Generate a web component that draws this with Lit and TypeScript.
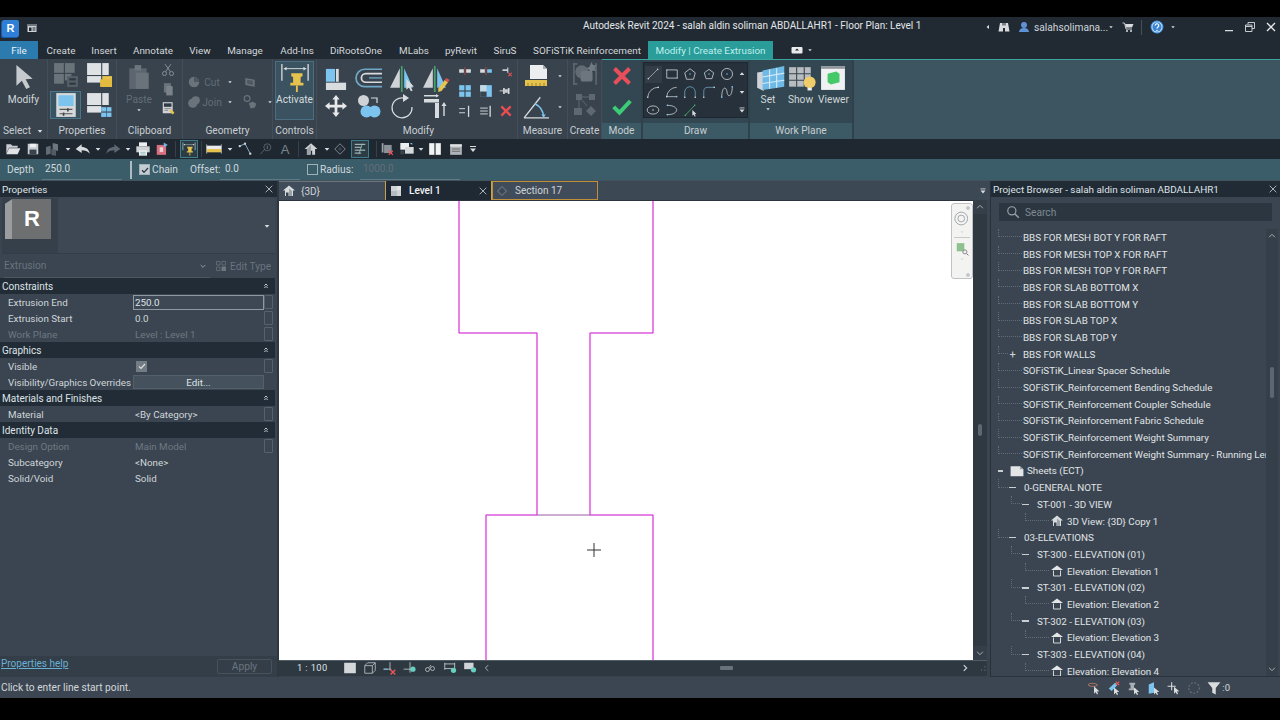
import { LitElement, html, css, svg } from "lit";
import { customElement } from "lit/decorators.js";

const W = "#d8dcdf", G = "#8b9299", D = "#5d6771", B = "#7cc4ee", Y = "#e6c24e";
const line = (d: string, c = W, w = 1.4) => svg`<path d=${d} fill="none" stroke=${c} stroke-width=${w}/>`;
const fill = (d: string, c = W) => svg`<path d=${d} fill=${c}/>`;
const r = (x: number, y: number, w: number, h: number, c = W) => svg`<rect x=${x} y=${y} width=${w} height=${h} fill=${c}/>`;
const dot = (x: number, y: number, c = B, s = 1.4) => svg`<circle cx=${x} cy=${y} r=${s} fill=${c}/>`;
const cursor = fill("M16 12l0 10 2.4-2.2 1.8 3.6 1.6-.8-1.8-3.5 3-.2z", W);

const ICONS: Record<string, any> = {
  logoDoc: svg`${r(3, 4, 18, 16, "#cfd3d6")}${r(3, 4, 18, 4, "#6d747b")}${r(6, 11, 5, 7, "#1f2933")}${r(13, 11, 6, 2, "#1f2933")}${r(13, 15, 6, 2, "#1f2933")}`,
  arrow: fill("M5 1V20l5-4.500 4 7.500 3.500-1.500-4-7.500 6.500-.5z", "#c6cace"),
  tilesGrey: svg`${r(1, 1, 9, 9, "#6b737a")}${r(11, 1, 9, 9, "#6b737a")}${r(1, 11, 9, 9, "#6b737a")}${r(11, 11, 6, 6, "#6b737a")}${r(13, 13, 10, 10, "#565e66")}${r(15, 15, 6, 2, "#2f3740")}${r(15, 19, 6, 2, "#2f3740")}`,
  tilesFolder: svg`${r(1, 1, 13, 11, "#dfe2e4")}${r(15, 1, 6, 11, "#dfe2e4")}${r(1, 13, 13, 6, "#dfe2e4")}${r(15, 13, 9, 10, Y)}${r(13, 16, 11, 7, "#e3bc3f")}`,
  propBox: svg`${r(3, 1, 18, 22, "#d6d9db")}${r(5, 3, 14, 10, B)}${line("M6 16H18M6 20H18", "#555", 1)}${r(13, 15, 1.5, 3, "#444")}${r(9, 19, 1.5, 3, "#444")}`,
  tilesBlue: svg`${r(1, 1, 13, 11, "#dfe2e4")}${r(15, 1, 6, 11, "#dfe2e4")}${r(1, 13, 13, 6, "#dfe2e4")}${r(14, 14, 4.500, 4, B)}${r(19, 14, 4.500, 4, B)}${r(14, 19, 4.500, 4, B)}${r(19, 19, 4.500, 4, B)}`,
  paste: svg`${r(3, 4, 16, 19, "#5d6670")}${r(8, 1, 6, 5, "#6d757d")}${r(9, 8, 12, 15, "#6a727a")}`,
  cut: svg`${line("M7 2l9 13M17 2L8 15", G, 1.6)}<circle cx="6" cy="18" r="3.500" fill="none" stroke=${G} stroke-width="1.600"/><circle cx="18" cy="18" r="3.500" fill="none" stroke=${G} stroke-width="1.600"/>`,
  copy: svg`${r(5, 2, 12, 16, "#6a727a")}${r(9, 7, 11, 16, "#7a828a")}`,
  matchProp: svg`${r(3, 2, 17, 19, "#cfd3d6")}${r(5, 4, 13, 6, "#2f3a44")}${line("M6 13h11M6 16h6", "#555", 1)}${fill("M14 17l4-3 5 6-3 3z", Y)}`,
  geoCut: svg`<circle cx="12" cy="12" r="9" fill="#6a727a"/><path d="M12 3a9 9 0 0 1 9 9H12z" fill="#4f5860"/>`,
  geoBox: svg`${fill("M4 5l16 3v12L4 17z", "#6a727a")}${fill("M7 8l10 2v7L7 15z", "#4f5860")}`,
  geoJoin: svg`<circle cx="10" cy="14" r="8" fill="#6a727a"/><circle cx="15" cy="9" r="7" fill="#6a727a"/>`,
  geoSplit: svg`<circle cx="7" cy="6" r="5" fill="none" stroke="#6a727a" stroke-width="2"/>${fill("M10 14l7-3 6 4-3 7-7 1z", "#6a727a")}`,
  pin: svg`${line("M2 1V19M30 1V19", W, 1.4)}${line("M4 6H28", W, 1)}${fill("M4 6l3-2v4zM28 6l-3-2v4z", W)}${fill("M12 11H24V14L22 15V21H25V24H11V21H14V15L12 14z", Y)}${r(17, 24, 2, 7, Y)}`,
  alignBox: svg`${r(1, 1, 10, 14, B)}${r(12, 1, 3, 14, "#d8dcdf")}${r(1, 16, 22, 8, "#d8dcdf")}`,
  offset: svg`${line("M24 3H8a8 8 0 0 0 0 16H24", "#6fa8c6", 1.6)}${line("M24 7H9a4 4 0 0 0 0 8H24", W, 1.6)}${line("M24 11H12", "#6fa8c6", 1.2)}`,
  mirror: svg`${fill("M10 2V20H1z", "#cfd3d6")}${fill("M14 2V20H22z", B)}${r(11, 0, 1.6, 24, "#46a06c")}${cursor}`,
  mirrorPick: svg`${fill("M10 2V20H1z", "#cfd3d6")}${fill("M14 2V20H22z", B)}${r(11, 0, 1.6, 24, "#46a06c")}${fill("M15 21l6-8 3 2-6 8-3 1z", Y)}${fill("M21 13l1.500-2 3 2-1.500 2z", "#e05050")}`,
  move: fill("M12 0l4 5h-2.500v5.500H19V8l5 4-5 4v-2.500H13.500V19H16l-4 5-4-5h2.500V13.500H5V16L0 12l5-4v2.500h5.500V5H8z", "#e6e8ea"),
  copyCircles: svg`<circle cx="6.500" cy="6.500" r="5.500" fill="#cfd3d6"/>${line("M14 4H20V9", W, 1.2)}<circle cx="9.500" cy="17.500" r="6" fill=${B}/><circle cx="17.500" cy="17.500" r="6" fill=${B}/>`,
  rotate: svg`${line("M14 4A10 10 0 1 0 22 13", W, 1.2)}${fill("M13 0l6 4-6 4z", W)}`,
  trim: svg`${r(1, 5, 15, 3.500, W)}${r(12, 9, 4, 15, W)}${r(1, 1, 12, 1.500, W)}${fill("M13 0l3 1.700-3 1.700z", W)}${line("M21 11V22", W, 1.4)}${fill("M21 8l2.500 4h-5z", W)}`,
  split1: svg`${r(2, 9, 8, 6, "#d8dcdf")}${r(14, 9, 8, 6, "#d8dcdf")}${r(11, 5, 1.800, 14, "#a04848")}`,
  split2: svg`${r(2, 9, 8, 6, "#d8dcdf")}${r(14, 9, 8, 6, B)}${r(11, 5, 1.800, 14, "#a04848")}`,
  pinX: svg`${fill("M6 9H14V6h2V15H14V12H6z", "#c9cdd1")}${line("M16 15l6 6M22 15l-6 6", "#e55", 1.800)}`,
  grid4: svg`${r(2, 2, 9, 9, B)}${r(13, 2, 9, 9, B)}${r(2, 13, 9, 9, B)}${r(13, 13, 9, 9, B)}`,
  scale: svg`${r(2, 2, 20, 20, B)}${r(2, 2, 11, 11, "#c4d9e4")}${r(2, 13, 11, 9, "#39444f")}`,
  pinH: svg`${r(7, 7, 3, 10, W)}${r(10, 9, 5, 6, "#c9cdd1")}${r(15, 7, 3, 10, W)}${r(1, 11, 6, 1.500, W)}`,
  arrayA: svg`${line("M2 8H12M2 15H12", W, 1.600)}${r(17, 3, 2.200, 19, W)}`,
  arrayB: svg`${line("M2 7H15M2 12H15M2 17H15", W, 1.600)}${r(18, 3, 2.200, 19, W)}`,
  redX: line("M4 4L20 20M20 4L4 20", "#ea4c50", 4),
  box3d: svg`${fill("M6 1H19L23 5V15H6z", "#eceeef")}${fill("M19 1V5H23z", "#a8adb2")}${r(1, 16, 22, 6, Y)}${line("M4 19v3M8 19v3M12 19v3M16 19v3M20 19v3", "#a0822a", 1)}`,
  angle: svg`${line("M1 22L16 3M1 22H24", W, 1.2)}${line("M11 9A14 14 0 0 1 19 21", B, 1.400)}${fill("M17 19h4l-2 3z", B)}`,
  createA: svg`${r(1, 2, 1.500, 20, D)}${r(1, 2, 4, 1.500, D)}${r(1, 20.500, 4, 1.500, D)}${r(21.500, 2, 1.500, 20, D)}<circle cx="9" cy="10" r="6" fill="#626b74"/><rect x="8" y="9" width="11" height="10" rx="2" fill="#6d767e"/>${fill("M18 1l1.500 3 3-.5-1.500 3 1.500 2.500-3.500 0-1.500 2-1.500-3-3-1 3-1.500z", "#707a83")}`,
  createB: svg`${r(3, 1, 6, 6, "#5f6871")}${r(16, 1, 6, 6, "#5f6871")}${r(1, 15, 8, 7, "#5f6871")}${fill("M18 13l5 5-5 5-5-5z", "#5f6871")}${line("M9 4H16M6 7V15M9 7L14 13", "#5f6871", 1)}`,
  bigX: line("M3 3L21 21M21 3L3 21", "#e84f58", 4.800),
  check: line("M2 13L9 20L22 6", "#3ecb75", 4.800),
  checkDark: line("M3 13L9 19L21 6", "#2c3a44", 4),
  checkW: line("M3 13L9 19L21 6", "#dde0e3", 3.600),
  dLine: svg`${line("M4 20L20 4", W, 1)}${dot(4, 20, "#cfd3d6")}${dot(20, 4, "#cfd3d6")}`,
  dRect: svg`${line("M3 5H21V19H3z", W, 1.300)}${dot(3, 5, B, 1.200)}${dot(21, 19, B, 1.200)}`,
  dPoly: svg`${line("M12 3L21 10L18 21H6L3 10z", W, 1.300)}${dot(12, 12, B, 1.200)}`,
  dPoly2: svg`${line("M12 4L20 10L17 20H7L4 10z", W, 1.300)}${dot(12, 12, B, 1.200)}`,
  dCircle: svg`<circle cx="12" cy="12" r="9.500" fill="none" stroke=${W} stroke-width="1.300"/>${dot(12, 12, B, 1.300)}`,
  dArc1: svg`${line("M3 21A18 18 0 0 1 21 4", W, 1.200)}${dot(3, 21, "#cfd3d6")}${dot(21, 4, "#cfd3d6")}`,
  dArc2: svg`${line("M3 20A17 17 0 0 1 20 4M3 20H20", W, 1.200)}${dot(20, 20, B)}${dot(3, 20, "#cfd3d6")}`,
  dArc3: svg`${line("M3 21V12a9 9 0 0 1 18 0V21", "#6fa8c6", 1.300)}${dot(3, 21, "#cfd3d6")}${dot(21, 21, "#cfd3d6")}`,
  dArc4: svg`${line("M3 21V11a7 7 0 0 1 7-7H21", "#6fa8c6", 1.300)}${dot(3, 21, "#cfd3d6")}${dot(21, 4, "#cfd3d6")}`,
  dSpline: svg`${line("M3 21C3 2 11 2 12 12S21 21 21 3", W, 1.300)}${dot(3, 21)}${dot(21, 3)}`,
  dEllipse: svg`<ellipse cx="12" cy="12" rx="10" ry="7" fill="none" stroke=${W} stroke-width="1.300"/>${dot(12, 12, W, 1.300)}`,
  dPartial: svg`${line("M4 4C16 4 20 9 20 12S16 20 4 20", W, 1.300)}${dot(4, 4)}${dot(4, 20)}`,
  dPick: svg`${line("M4 21L20 4", "#4bbb6c", 1.300)}${dot(4, 21, "#4bbb6c")}${dot(20, 4, "#4bbb6c")}${cursor}`,
  wpSet: svg`${fill("M2 7L8 6V24L2 21z", "#d0d4d8")}${fill("M7 5L27 1V20L7 23z", "#6fb9e6")}${line("M13.500 4V22M20 3V21M7 11L27 7.500M7 17L27 14", "#d5ecf8", 1)}`,
  wpShow: svg`${fill("M1 2H21V20H1z", "#b7bcc0")}${line("M8 2V20M15 2V20M1 8H21M1 14H21", "#39444f", 1)}<circle cx="20" cy="16" r="5.500" fill="#f0cd6a"/>${r(18, 21, 4, 2.500, "#eceeef")}`,
  wpViewer: svg`${r(1, 1, 22, 22, "#eff1f2")}${r(1, 1, 22, 2.500, "#8f959a")}${fill("M7 8L15 6L18 8V16L10 18L7 16z", "#44c868")}`,
  binoc: svg`${fill("M4 4H9V9H11V4H13 13V9H15V4H20L23 21H14V14H10V21H1z", W)}`,
  user: svg`<circle cx="12" cy="8" r="6" fill="#5e92d6"/>${fill("M2 22C3 15 8 14 12 14S21 15 22 22z", "#5e92d6")}`,
  cart: svg`${line("M1 4H5L8 16H20", W, 1.800)}${fill("M6 6H23L20 13H8z", W)}${dot(10, 20, W, 2)}${dot(18, 20, W, 2)}`,
  help: svg`<circle cx="12" cy="12" r="11" fill="#4d9be6"/><circle cx="12" cy="12" r="9" fill="#f2f6fa"/><circle cx="12" cy="12" r="8" fill="#3a86d4"/>${line("M9 9.500a3 3 0 1 1 4.500 2.500c-1 .7-1.500 1.200-1.500 2.500", "#fff", 2)}${dot(12, 18, "#fff", 1.300)}`,
  camera: svg`<rect x="1" y="6" width="22" height="13" rx="2" fill="#e8eaec"/>${fill("M8 13H16L12 9z", "#222")}`,
  min: r(4, 18, 16, 2.500, W),
  restore: svg`${line("M8 7V3H21V15H16", W, 1.800)}${line("M3 8H16V21H3zM3 11H16", W, 1.800)}`,
  close: line("M4 4L20 20M20 4L4 20", "#e8eaec", 2.600),
  closeThin: line("M4 4L20 20M20 4L4 20", "#d8dcdf", 1.800),
  open: svg`${fill("M2 5H9L11 7H19V10H6L2 19z", "#c9cdd1")}${fill("M6 11H23L19 20H2z", "#e0e2e4")}`,
  save: svg`${r(3, 3, 18, 18, "#c9cdd1")}${r(7, 3, 10, 6, "#eef0f1")}${r(6, 13, 12, 8, "#39434d")}`,
  models: svg`${fill("M3 9L10 7V19L3 21z", "#626b74")}${fill("M13 3L21 5V15L13 13z", "#6d767e")}${fill("M11 12L18 13V22L11 21z", "#535c65")}`,
  undo: fill("M10 5L1 12L10 18V14C15 14 19 15 22 19C21 12 16 9 10 9z", "#d8dcdf"),
  redo: fill("M14 5L23 12L14 18V14C9 14 5 15 2 19C3 12 8 9 14 9z", "#5d6771"),
  print: svg`${r(6, 2, 12, 6, "#eceeef")}${r(2, 8, 20, 9, "#cfd3d6")}${r(6, 14, 12, 8, "#eef0f2")}${line("M8 17H16M8 19.500H16", "#7aa", 1)}`,
  sheet: svg`${r(3, 5, 16, 17, "#d9707f")}${r(8, 9, 6, 8, "#ecd3d8")}${fill("M15 1L22 5L15 9z", "#6fb8e8")}`,
  ruler: svg`${r(1, 7, 22, 5, "#e8eaec")}${r(1, 12, 22, 5, Y)}${line("M1 5V19M23 5V19", W, 1)}`,
  align: svg`${line("M3 7L12 3L21 20", "#8fb8cd", 1.500)}${dot(3, 7, "#cfd3d6", 2)}${dot(12, 3, "#cfd3d6", 2)}${dot(21, 20, "#cfd3d6", 2)}`,
  tag: svg`${line("M4 21L12 12", D, 1.400)}<circle cx="16" cy="9" r="6" fill="none" stroke=${D} stroke-width="1.500"/>${r(15, 6, 2, 6, D)}`,
  home: svg`${fill("M12 2L23 12H19V22H14V15H10V22H5V12H1z", "#cfd3d6")}${fill("M5 12L12 5V22H5z", "#9aa1a7")}`,
  section: svg`${line("M12 3L21 12L12 21L3 12z", "#8b9299", 1.500)}<circle cx="12" cy="12" r="3" fill="#39444f"/>`,
  rows: svg`${line("M3 4H21M3 9H14M3 14H21M3 19H14", W, 1.500)}${line("M10 21L16 3", "#7dc0a8", 1.500)}`,
  closeHidden: svg`${r(3, 2, 3, 16, "#9aa1a7")}${r(7, 5, 13, 14, "#8a9198")}${line("M15 15L22 22M22 15L15 22", "#e55", 2)}`,
  tabViews: svg`${r(2, 3, 13, 10, "#eceeef")}${r(9, 9, 13, 10, "#d6d9db")}${fill("M16 3l4 0 0 3z", "#6fb8e8")}${r(2, 14, 6, 6, "#39444f")}`,
  panes: svg`${r(2, 2, 9, 20, "#f2f3f4")}${r(13, 2, 9, 20, "#f2f3f4")}`,
  ui: svg`${r(2, 4, 20, 18, "#aeb3b8")}${r(2, 4, 20, 4, "#e0e2e4")}${r(5, 11, 14, 2, "#777")}${r(5, 15, 14, 2, "#777")}`,
  qatMore: svg`${r(6, 6, 12, 2, W)}${fill("M6 11H18L12 18z", W)}`,
  viewPlan: svg`${r(2, 2, 20, 20, "#cdd3d6")}${r(14, 2, 8, 8, "#e3e6e8")}${r(2, 12, 12, 10, "#b6bbbf")}`,
  editType: svg`${line("M3 3H10V10H3zM14 3H21V10H14zM3 14H10V21H3z", "#6d767f", 1.400)}${r(13, 13, 9, 9, "#6d767f")}`,
  caretD: fill("M5 9H19L12 17z", W),
  caretU: fill("M5 15H19L12 7z", W),
  caretL: fill("M16 4V20L6 12z", W),
  chevU: line("M5 15L12 8L19 15", "#a8aeb4", 2.400),
  chevD: line("M5 9L12 16L19 9", "#a8aeb4", 2.400),
  chevL: line("M15 5L8 12L15 19", "#a8aeb4", 2.400),
  chevR: line("M9 5L16 12L9 19", "#d0d4d8", 2.800),
  dblUp: line("M7 11L12 6L17 11M7 18L12 13L17 18", "#e4e6e8", 2.600),
  search: svg`<circle cx="10" cy="10" r="7" fill="none" stroke="#98a1a9" stroke-width="2"/>${line("M15 15L22 22", "#98a1a9", 2.400)}`,
  nav2d: svg`<circle cx="11" cy="10" r="8.500" fill="none" stroke="#9aa0a6" stroke-width="1.200"/><circle cx="11" cy="10" r="4.500" fill="none" stroke="#9aa0a6" stroke-width="1.200"/>`,
  navZoom: svg`${r(3, 2, 13, 14, "#8fc08f")}<circle cx="17" cy="17" r="3.500" fill="#eee" stroke="#666" stroke-width="1.200"/>${line("M20 20L23 23", "#666", 1.500)}`,
  gear: svg`<circle cx="12" cy="12" r="7" fill="#aab0b5"/><circle cx="12" cy="12" r="3" fill="#eee"/>`,
  grip: svg`${dot(18, 8, "#8a9198", 1.600)}${dot(18, 18, "#8a9198", 1.600)}${dot(8, 18, "#8a9198", 1.600)}`,
  vbDetail: r(2, 3, 20, 18, "#d4d7da"),
  vbCube: svg`${line("M3 8H16V21H3zM3 8L8 3H21V16L16 21M16 8L21 3", "#c9cdd1", 1.300)}`,
  vbCropX: svg`${line("M1 14H14M12 2V16", "#d0d4d8", 1.300)}${line("M1 14H8", B, 1.600)}${line("M13 15L21 23M21 15L13 23", "#e55", 2.400)}`,
  vbCropDot: svg`${line("M1 14H14M12 2V20", "#d0d4d8", 1.300)}${dot(17, 14, "#67d0c0", 4.500)}`,
  vbGlass: svg`<circle cx="7" cy="15" r="4" fill="none" stroke=${W} stroke-width="1.400"/><circle cx="17" cy="13" r="4" fill="none" stroke=${W} stroke-width="1.400"/>${line("M10 11L14 6", W, 1.400)}`,
  vbFrame: svg`${line("M3 5H20M3 3V15M20 3V15M3 13H17", "#d0d4d8", 1.400)}${dot(18, 16, "#67d0c0", 4.500)}`,
  vbWin: svg`${r(2, 3, 16, 11, "#d0d4d8")}${dot(18, 15, "#67d0c0", 4.500)}`,
  sheetIc: svg`${fill("M1 4H17L23 9V21H1z", "#e3e5e7")}${fill("M17 4L23 9H17z", "#9aa1a7")}`,
  house3d: svg`${fill("M12 1L24 11H20V22H4V11H0z", "#d8dcdf")}${fill("M12 7L18 12V22H12z", "#9aa1a7")}${r(6, 15, 5, 7, "#39444f")}`,
  elev: svg`${fill("M12 1L24 10H0z", "#e3e5e7")}${line("M5 11V22H19V11", "#e3e5e7", 1.800)}`,
  stLoop: svg`${line("M2 7c0-4 14-4 16 0M2 7c2 3 14 3 16 0", "#d98a6a", 1.200)}${fill("M12 9v13l3-3 2 4 2-1-2-4 4-.5z", W)}`,
  stLink: svg`${fill("M3 13L14 3L18 7L8 17z", B)}${line("M15 1L21 7M21 1L15 7", "#e55", 1.800)}${fill("M12 11v12l3-3 2 4 2-1-2-4 4-.5z", W)}`,
  stPin: svg`${fill("M4 3H14V6L12 7V13H15V16H3V13H6V7L4 6z", "#a8aeb4")}${fill("M12 11v12l3-3 2 4 2-1-2-4 4-.5z", W)}`,
  stFace: svg`${fill("M3 6L12 2V20L3 22z", B)}${fill("M12 11v12l3-3 2 4 2-1-2-4 4-.5z", W)}`,
  stDrag: svg`${line("M1 9H15M8 2V16", W, 1.800)}${fill("M12 10v12l3-3 2 4 2-1-2-4 4-.5z", W)}`,
  stDots: svg`<circle cx="12" cy="12" r="9" fill="none" stroke="#6d767f" stroke-width="1.800" stroke-dasharray="3 3"/>`,
  funnel: fill("M1 2H23L15 12V23L9 20V12z", "#d8dcdf"),
};

const ic = (n: string, s = "s16", cls = "") => html`<svg class="i ${s} ${cls}" viewBox=${n === "pin" ? "0 0 32 32" : "0 0 24 24"}>${ICONS[n]}</svg>`;

const TABS: [string, number][] = [["Create", 46], ["Insert", 40], ["Annotate", 58], ["View", 36], ["Manage", 54], ["Add-Ins", 50], ["DiRootsOne", 68], ["MLabs", 48], ["pyRevit", 46], ["SiruS", 42], ["SOFiSTiK Reinforcement", 122]];

const QAT: [string, number, string][] = [
  ["open", 26, "s16"], ["save", 14, "s14"], ["models", 24, "s16"], ["caretD", 8, "s8"], ["undo", 22, "s16"], ["caretD", 8, "s8"], ["redo", 22, "s16"], ["caretD", 8, "s8"],
  ["print", 22, "s16"], ["sheet", 16, "s14"], ["SEP", 10, ""], ["pin", 18, "box"], ["SEP", 6, ""], ["ruler", 20, "s16"], ["caretD", 12, "s8"], ["align", 18, "s14"], ["tag", 22, "s14"], ["A", 18, ""],
  ["SEP", 8, ""], ["home", 18, "s14"], ["caretD", 14, "s8"], ["section", 12, "s14"], ["rows", 28, "box"], ["SEP", 4, ""], ["closeHidden", 18, "s14"], ["tabViews", 22, "s16"], ["caretD", 6, "s8"], ["panes", 22, "s14"], ["ui", 20, "s14"], ["qatMore", 14, "s12"],
];

type TreeRow = { k: string; t: string; i?: string };
const TREE: TreeRow[] = [
  ...["BBS FOR MESH BOT Y FOR RAFT", "BBS FOR MESH TOP X FOR RAFT", "BBS FOR MESH TOP Y FOR RAFT", "BBS FOR SLAB BOTTOM X", "BBS FOR SLAB BOTTOM Y", "BBS FOR SLAB TOP X", "BBS FOR SLAB TOP Y"].map((t) => ({ k: "leaf", t })),
  { k: "plus", t: "BBS FOR WALLS" },
  ...["SOFiSTiK_Linear Spacer Schedule", "SOFiSTiK_Reinforcement Bending Schedule", "SOFiSTiK_Reinforcement Coupler Schedule", "SOFiSTiK_Reinforcement Fabric Schedule", "SOFiSTiK_Reinforcement Weight Summary", "SOFiSTiK_Reinforcement Weight Summary - Running Length"].map((t) => ({ k: "leaf", t })),
  { k: "root", t: "Sheets (ECT)" },
  { k: "l1", t: "0-GENERAL NOTE" },
  { k: "l2", t: "ST-001 - 3D VIEW" },
  { k: "l3", t: "3D View: {3D} Copy 1", i: "house3d" },
  { k: "l1", t: "03-ELEVATIONS" },
  { k: "l2", t: "ST-300 - ELEVATION (01)" },
  { k: "l3", t: "Elevation: Elevation 1", i: "elev" },
  { k: "l2", t: "ST-301 - ELEVATION (02)" },
  { k: "l3", t: "Elevation: Elevation 2", i: "elev" },
  { k: "l2", t: "ST-302 - ELEVATION (03)" },
  { k: "l3", t: "Elevation: Elevation 3", i: "elev" },
  { k: "l2", t: "ST-303 - ELEVATION (04)" },
  { k: "l3", t: "Elevation: Elevation 4", i: "elev" },
];

const PROPS: { h?: string; l?: string; v?: string; dim?: boolean; box?: boolean; kind?: string }[] = [
  { h: "Constraints" },
  { l: "Extrusion End", v: "250.0", box: true, kind: "input" },
  { l: "Extrusion Start", v: "0.0", box: true },
  { l: "Work Plane", v: "Level : Level 1", dim: true, box: true },
  { h: "Graphics" },
  { l: "Visible", kind: "check", box: true },
  { l: "Visibility/Graphics Overrides", kind: "btn" },
  { h: "Materials and Finishes" },
  { l: "Material", v: "<By Category>", box: true },
  { h: "Identity Data" },
  { l: "Design Option", v: "Main Model", dim: true, box: true },
  { l: "Subcategory", v: "<None>" },
  { l: "Solid/Void", v: "Solid" },
];

@customElement("app-root")
export class AppRoot extends LitElement {
  static styles = css`
    :host { display: block; width: 1280px; height: 720px; background: #000; overflow: hidden; font-family: Roboto, "Noto Sans", sans-serif; font-size: 10.2px; color: #dfe3e6; }
    * { box-sizing: border-box; }
    .i { display: block; flex: none; overflow: visible; }
    .s6 { width: 6px; height: 6px; } .s8 { width: 8px; height: 8px; } .s10 { width: 10px; height: 10px; } .s12 { width: 12px; height: 12px; } .s14 { width: 14px; height: 14px; } .s16 { width: 16px; height: 16px; } .s18 { width: 18px; height: 18px; } .s20 { width: 20px; height: 20px; } .s22 { width: 22px; height: 22px; } .s24 { width: 24px; height: 24px; } .s26 { width: 26px; height: 26px; } .s30 { width: 30px; height: 30px; } .s32 { width: 32px; height: 32px; }
    .blackTop { height: 17px; }
    .blackBot { height: 22px; }

    .titlebar { height: 24px; background: #212a33; display: flex; align-items: center; }
    .tl { width: 583px; display: flex; align-items: center; gap: 7px; padding: 0 0 2px 2px; }
    .rlogo { width: 17px; height: 17px; background: #2f7fd6; color: #fff; font: 700 11px "Liberation Sans", sans-serif; display: flex; align-items: center; justify-content: center; border-radius: 2px; box-shadow: -1px 1px 0 #1b5aa8; }
    .title { flex: 1; font-size: 10px; padding-bottom: 8px; color: #e3e6e8; white-space: nowrap; }
    .tr { display: flex; align-items: center; height: 100%; padding: 0 3px 4px 0; }
    .cell { display: flex; align-items: center; justify-content: center; flex: none; }
    .uname { width: 73px; font-size: 10.2px; white-space: nowrap; color: #cfd6db; }
    .vsep { width: 1px; height: 15px; background: #465059; }

    .tabs { height: 18px; background: #212a33; display: flex; align-items: stretch; }
    .tab { display: flex; align-items: center; justify-content: center; white-space: nowrap; font-size: 9.9px; color: #d3d7da; }
    .tab.file { width: 38px; background: #2b7bae; color: #e9f2f7; }
    .tab.ctx { width: 125px; background: #2a9c9a; color: #bff0ec; }
    .tabCam { display: flex; align-items: center; gap: 4px; padding-left: 18px; }

    .ribbon { height: 80px; display: flex; background: #3d5560; }
    .rLeft { display: flex; background: #38434e; width: 602px; }
    .rRight { display: flex; flex: 1; border-top: 1.5px solid #3aa69e; background: #3d5560; }
    .panel { display: flex; flex-direction: column; flex: none; border-right: 1px solid #434e59; }
    .pbody { height: 64px; display: flex; }
    .plabel { height: 16px; padding-bottom: 1px; display: flex; align-items: center; justify-content: center; font-size: 10.2px; color: #c9ced2; gap: 5px; }
    .lbm { padding-left: 3px; }
    .ctx .pbody { background: #324751; height: 62.500px; }
    .ctx .plabel { background: #3c5a65; padding-bottom: 1px; }
    .ctx.panel { border-right: 2px solid #2f424c; }
    .big { display: flex; flex-direction: column; align-items: center; padding-top: 5px; font-size: 10.2px; color: #d3d7da; line-height: 14px; }
    .big .i { margin-bottom: 3px; }
    .dim { color: #636d77; }
    .g22 { display: grid; grid-template-columns: 33px 33px; grid-template-rows: 30px 30px; padding: 1px 0 0 1px; align-items: center; justify-items: center; }
    .hl { width: 31px; height: 28px; display: flex; align-items: center; justify-content: center; background: #3b5462; border: 1px solid #4a7488; }
    .smallcol { display: flex; flex-direction: column; justify-content: space-between; padding: 4px 0; align-items: center; height: 60px; }
    .createCol { display: flex; flex-direction: column; align-items: center; width: 34px; gap: 6px; padding-top: 2px; }
    .geo { display: grid; grid-template-columns: 14px 22px 14px 26px 14px; grid-template-rows: 20px 20px; padding: 13px 0 0 4px; align-items: center; justify-items: center; font-size: 10.2px; color: #636d77; }
    .activate { margin: 2px; width: 40px; height: 59px; background: #3b5260; border: 1px solid #4a6f82; display: flex; flex-direction: column; align-items: center; padding-top: 1px; font-size: 10.2px; color: #d8dcdf; line-height: 14px; }
    .activate .i { margin-bottom: 0; }
    .mgrid { display: grid; grid-template-columns: repeat(4, 33px); grid-template-rows: 27px 27px; padding: 6px 0 0 2px; align-items: center; justify-items: center; }
    .mgrid2 { display: grid; grid-template-columns: repeat(3, 20.500px); grid-template-rows: repeat(3, 20px); padding: 2px 0 0 4px; align-items: center; justify-items: center; }
    .meas { display: grid; grid-template-columns: 34px 14px; grid-template-rows: 32px 30px; padding: 1px 0 0 1px; align-items: center; justify-items: center; }
    .mode { display: flex; flex-direction: column; align-items: center; width: 100%; gap: 10px; padding-top: 6px; }
    .draw { margin: 2px 0 0 0; width: 105px; height: 56px; background: #27313b; border: 1px solid #1e272f; display: grid; grid-template-columns: repeat(5, 18.500px) 11px; grid-template-rows: repeat(3, 18px); align-items: center; justify-items: center; padding: 2px 0 0 0; }
    .dsel { background: #323d48; width: 17px; height: 17px; display: flex; align-items: center; justify-content: center; }
    .wp { display: grid; grid-template-columns: 32px 33px 33px; padding: 5px 0 0 2px; justify-items: center; font-size: 10.2px; line-height: 13px; color: #d3d7da; }
    .wp .i { margin-bottom: 2px; }
    .wp .col { display: flex; flex-direction: column; align-items: center; }

    .qat { height: 20px; background: #1f2831; display: flex; align-items: center; }
    .qcell { display: flex; align-items: center; justify-content: center; flex: none; height: 20px; font: 13px "Liberation Sans", sans-serif; color: #7c858d; }
    .qsep { width: 1px; height: 16px; background: #36414b; }
    .qbox { width: 18px; height: 18px; flex: none; border: 1px solid #3e7d8c; background: #2c3c45; display: flex; align-items: center; justify-content: center; }

    .opts { height: 22px; background: #3b5c69; display: flex; align-items: center; color: #cfd9dd; font-size: 10.2px; border-bottom: 1px solid #44525b; }
    .optL { flex: none; white-space: nowrap; }
    .optI { flex: none; height: 100%; border-bottom: 1px solid #5d7a86; display: flex; align-items: center; padding: 0 0 1px 3px; font-size: 10px; }
    .optI5 { flex: none; height: 100%; border-bottom: 1px solid #5d7a86; display: flex; align-items: center; padding: 0 0 1px 5px; font-size: 10px; }
    .cb { width: 11px; height: 11px; border: 1px solid #9fb2ba; flex: none; display: flex; align-items: center; justify-content: center; }
    .cb.on { background: #c4ccd1; }
    .optDiv { width: 2px; height: 18px; background: #aebcc2; flex: none; }

    .main { height: 496px; display: flex; background: #2e3841; }
    .left { width: 277px; background: #3a4551; display: flex; flex-direction: column; flex: none; }
    .phead { height: 16px; background: #212b36; display: flex; align-items: center; justify-content: space-between; padding: 0 2px 0 2px; font-size: 9.9px; color: #dfe3e6; flex: none; }
    .phead.l { padding-right: 3px; }
    .thumbRow { height: 56px; display: flex; align-items: center; border-bottom: 1px solid #333d48; margin: 1px 2px 0; background: #3d4854; flex: none; }
    .thumb { width: 56px; height: 55px; background: #36404b; padding: 1px 3px; }
    .thumbR { width: 46px; height: 40px; background: linear-gradient(90deg, #9a9da0 0 16%, #6e6f70 16%); display: flex; align-items: center; justify-content: center; padding-left: 8px; color: #fff; font: 700 22px "Liberation Sans", sans-serif; clip-path: polygon(0 12%, 16% 0, 100% 0, 100% 100%, 16% 100%, 0 100%); }
    .thumbC { flex: 1; }
    .typeRow { height: 24px; display: flex; align-items: center; padding: 0 4px; color: #69737d; font-size: 10.2px; flex: none; white-space: nowrap; }
    .typeName { width: 206px; height: 100%; display: flex; align-items: center; justify-content: space-between; border-bottom: 1px solid #4c5762; padding-right: 3px; margin-right: 5px; flex: none; }
    .typeEdit { display: flex; align-items: center; gap: 3px; }
    .sec { height: 16px; background: #222c37; display: flex; align-items: center; justify-content: space-between; padding: 0 5px 0 2px; margin-right: 2px; color: #dfe3e6; font-size: 10px; flex: none; }
    .row { height: 16px; display: grid; grid-template-columns: 133px 131px 9px; margin-right: 2px; align-items: center; font-size: 9.8px; flex: none; color: #d0d5d9; }
    .row .lb { padding-left: 8px; white-space: nowrap; }
    .row .val { padding-left: 2px; white-space: nowrap; }
    .row.dimmed { color: #6e7882; }
    .row .inp { height: 15px; border: 1px solid #8e99a3; background: #3d4854; display: flex; align-items: center; padding-left: 1px; color: #dfe3e6; }
    .row .btn { height: 14px; border: 1px solid #52606c; background: #45525e; display: flex; align-items: center; justify-content: center; color: #dfe3e6; }
    .row .sbox { width: 9px; height: 14px; border: 1px solid #56616c; border-radius: 1px; }
    .vchk { width: 11px; height: 11px; background: #727c85; display: flex; align-items: center; justify-content: center; margin-left: 3px; }
    .pfill { flex: 1; }
    .pfoot { height: 21px; flex: none; background: #343e49; display: flex; align-items: center; justify-content: space-between; padding: 0 5px 0 1px; }
    .plink { color: #68b0d4; text-decoration: underline; font-size: 10px; padding-bottom: 6px; }
    .apply { width: 55px; height: 15px; border: 1px solid #48525c; border-radius: 2px; color: #6a747e; display: flex; align-items: center; justify-content: center; font-size: 10.2px; margin-bottom: 1px; }

    .center { width: 711px; margin-left: 2px; flex: none; display: flex; flex-direction: column; background: #38434e; }
    .dtabs { height: 19px; display: flex; background: #3d4855; flex: none; padding-right: 2px; }
    .dtab { width: 106px; display: flex; align-items: center; font-size: 10px; color: #cfd4d8; padding-left: 4px; border-top: 1px solid #6b7580; background: #414c5a; gap: 6px; }
    .dtab.on { background: #1f2934; border-top: 0; border-left: 1px solid #c9a24a; border-right: 1px solid #c9a24a; color: #f2f3f4; font-weight: 500; justify-content: space-between; padding-right: 3px; width: 107px; }
    .dtab.sec17 { border: 1px solid #c08f3a; gap: 7px; width: 106px; padding-left: 3px; }
    .dtabOn { display: flex; align-items: center; gap: 7px; }
    .dtabMore { margin-left: auto; align-self: center; }
    .cArea { display: flex; height: 460px; flex: none; }
    .canvas { width: 694px; background: #fff; position: relative; overflow: hidden; border-top: 1px solid #2b343d; flex: none; }
    .canvas > svg.d { display: block; }
    .nav { position: absolute; right: 0; top: 2px; width: 22px; height: 76px; background: #f3f3f2; border: 1px solid #bfc3c5; border-radius: 3px; display: flex; flex-direction: column; align-items: center; padding-top: 1px; }
    .navGear { align-self: flex-end; margin: 0 1px; }
    .navSep { width: 16px; height: 1px; background: #c8c8c8; margin: 2px 0 4px; }
    .vs { width: 14px; flex: none; background: #2f3942; display: flex; flex-direction: column; align-items: center; justify-content: space-between; }
    .vsT { width: 14px; height: 14px; display: flex; align-items: center; justify-content: center; background: #343f49; }
    .vsTh { width: 4px; height: 12px; background: #5e6872; border-radius: 2px; }
    .vgap { width: 3px; background: #3a4551; flex: none; }
    .vbar { height: 16px; width: 708px; display: flex; align-items: center; background: #2e3841; flex: none; font-size: 9.3px; color: #dfe3e6; border-top: 1px solid #525c66; padding-bottom: 2px; }
    .vscale { width: 61px; padding-left: 18px; white-space: nowrap; letter-spacing: .4px; flex: none; }
    .vcell { width: 20px; display: flex; align-items: center; justify-content: center; flex: none; }
    .vthumbWrap { width: 464px; flex: none; display: flex; align-items: center; justify-content: center; }
    .vthumb { width: 13px; height: 4px; background: #69727b; border-radius: 1px; }
    .vend { flex: 1; display: flex; justify-content: flex-end; align-items: center; margin-right: -1px; }
    .vgrip { width: 18px; display: flex; justify-content: flex-end; flex: none; }
    .pad { flex: 1; background: #38434e; }

    .right { width: 290px; flex: none; background: #3a4551; display: flex; flex-direction: column; border-left: 1px solid #28313a; }
    .searchWrap { height: 32px; padding: 6px 8px 0 8px; flex: none; }
    .search { height: 18px; background: #2c3640; display: flex; align-items: center; gap: 5px; padding-left: 7px; color: #7f8a93; font-size: 10.2px; }
    .treeWrap { flex: 1; display: flex; overflow: hidden; padding-left: 7px; border-bottom: 1px solid #2a333c; }
    .tree { flex: 1; min-width: 0; overflow: hidden; }
    .t { height: 16.700px; display: flex; align-items: center; white-space: nowrap; font-size: 9.8px; color: #e0e4e6; overflow: hidden; }
    .tick { height: 50%; align-self: flex-start; border-bottom: 1px dotted #616c76; border-left: 1px dotted #616c76; flex: none; }
    .t .m { width: 7px; height: 1.500px; background: #c9ced2; flex: none; }
    .t.leaf .tick { width: 24px; }
    .t.leaf .lbl { padding-left: 1px; }
    .t.plus .tick { width: 10px; }
    .t.plus .pl { width: 15px; flex: none; display: flex; justify-content: center; font-size: 11px; color: #d0d5d9; padding-right: 6px; }
    .t.root .m { margin: 0 7px 0 -2px; }
    .t.root .lbl { padding-left: 3px; }
    .t.l1 .tick { width: 10px; } .t.l1 .m { margin: 0 8px 0 1px; }
    .t.l2 .tickGap { width: 13px; flex: none; } .t.l2 .tick { width: 11px; } .t.l2 .m { margin: 0 8px 0 0; }
    .t.l3 .tickGap { width: 27px; flex: none; } .t.l3 .tick { width: 24px; } .t.l3 .i { margin: 0 4px 0 2px; }
    .ts { width: 12px; margin-right: 2px; flex: none; display: flex; flex-direction: column; align-items: center; justify-content: space-between; background: #353f4a; }
    .tsT { height: 14px; display: flex; align-items: center; }
    .tsTh { width: 4px; height: 31px; background: #5c6670; border-radius: 2px; margin-top: -140px; }

    .status { height: 21px; background: #3b4652; display: flex; align-items: center; justify-content: space-between; padding: 0 50px 0 1px; font-size: 10.2px; color: #d3d7da; }
    .stIcons { display: flex; align-items: center; gap: 6px; }
    .stZero { margin-left: -5px; font-size: 9.5px; }
  `;

  private tabs() {
    return html`<div class="tabs">
      <div class="tab file">File</div>
      ${TABS.map(([t, w]) => html`<div class="tab" style="width:${w}px">${t}</div>`)}
      <div class="tab ctx">Modify | Create Extrusion</div>
      <div class="tabCam">${ic("camera", "s12")}${ic("caretD", "s6")}</div>
    </div>`;
  }

  private ribbon() {
    const panel = (w: number, label: any, body: any, ctx = false) => html`<div class="panel ${ctx ? "ctx" : ""}" style="width:${w}px"><div class="pbody">${body}</div><div class="plabel">${label}</div></div>`;
    const dic = ["dLine", "dRect", "dPoly", "dPoly2", "dCircle", "caretU", "dArc1", "dArc2", "dArc3", "dArc4", "dSpline", "caretD", "dEllipse", "dPartial", "dPick", "", "", "qatMore"];
    return html`<div class="ribbon">
      <div class="rLeft">
        ${panel(48, html`Select ${ic("caretD", "s8")}`, html`<div class="big" style="width:48px">${ic("arrow", "s26")}Modify</div>`)}
        ${panel(69, "Properties", html`<div class="g22">
          ${ic("tilesGrey", "s26")}${ic("tilesFolder", "s26")}
          <div class="hl">${ic("propBox", "s26")}</div>${ic("tilesBlue", "s26")}</div>`)}
        ${panel(66, "Clipboard", html`<div class="big dim" style="width:44px">${ic("paste", "s26")}Paste${ic("caretD", "s6")}</div><div class="smallcol">${ic("cut", "s14")}${ic("copy", "s14")}${ic("matchProp", "s14")}</div>`)}
        ${panel(90, "Geometry", html`<div class="geo">
          ${ic("geoCut", "s14")}<span>Cut</span>${ic("caretD", "s6")}${ic("geoBox", "s14")}<span></span>
          ${ic("geoJoin", "s14")}<span>Join</span>${ic("caretD", "s6")}${ic("geoSplit", "s14")}${ic("caretD", "s6")}</div>`)}
        ${panel(44, "Controls", html`<div class="activate">${ic("pin", "s30")}Activate</div>`)}
        ${panel(201, html`<span class="lbm">Modify</span>`, html`<div class="mgrid">
          ${ic("alignBox", "s22")}${ic("offset", "s26")}${ic("mirror", "s26")}${ic("mirrorPick", "s26")}
          ${ic("move", "s22")}${ic("copyCircles", "s24")}${ic("rotate", "s24")}${ic("trim", "s24")}
        </div><div class="mgrid2">
          ${ic("split1", "s14")}${ic("split2", "s14")}${ic("pinX", "s14")}
          ${ic("grid4", "s14")}${ic("scale", "s14")}${ic("pinH", "s14")}
          ${ic("arrayA", "s14")}${ic("arrayB", "s14")}${ic("redX", "s14")}
        </div>`)}
        ${panel(50, "Measure", html`<div class="meas">${ic("box3d", "s24")}${ic("caretD", "s6")}${ic("angle", "s26")}${ic("caretD", "s6")}</div>`)}
        ${panel(34, "Create", html`<div class="createCol">${ic("createA", "s26")}${ic("createB", "s24")}</div>`)}
      </div>
      <div class="rRight">
        ${panel(41, "Mode", html`<div class="mode">${ic("bigX", "s20")}${ic("check", "s20")}</div>`, true)}
        ${panel(107, "Draw", html`<div class="draw">${dic.map((n, i) => n === "" ? html`<span></span>` : i === 0 ? html`<div class="dsel">${ic(n, "s14")}</div>` : n.startsWith("caret") ? ic(n, "s8") : n === "qatMore" ? ic(n, "s10") : ic(n, "s14"))}</div>`, true)}
        ${panel(104, "Work Plane", html`<div class="wp">
          <div class="col">${ic("wpSet", "s26")}<span>Set</span>${ic("caretD", "s6")}</div>
          <div class="col">${ic("wpShow", "s26")}<span>Show</span></div>
          <div class="col">${ic("wpViewer", "s26")}<span>Viewer</span></div></div>`, true)}
      </div>
    </div>`;
  }

  private qat() {
    return html`<div class="qat">${QAT.map(([n, w, s]) => {
      const style = `width:${w}px`;
      if (n === "SEP") return html`<div class="qcell" style=${style}><div class="qsep"></div></div>`;
      if (n === "A") return html`<div class="qcell" style=${style}>A</div>`;
      if (s === "box") return html`<div class="qcell" style=${style}><div class="qbox">${ic(n, "s14")}</div></div>`;
      return html`<div class="qcell" style=${style}>${ic(n, s)}</div>`;
    })}</div>`;
  }

  private opts() {
    const it = (w: number, c: any, cls = "optL") => html`<div class=${cls} style="width:${w}px">${c}</div>`;
    return html`<div class="opts">
      ${it(7, "")}${it(35, "Depth")}${it(80, "250.0", "optI")}${it(8, "")}<div class="optDiv"></div>${it(7, "")}
      <div class="cb on">${ic("checkDark", "s8")}</div>${it(2, "")}${it(36, "Chain")}${it(2, "")}${it(30, "Offset:")}
      ${it(80, "0.0", "optI5")}${it(7, "")}<div class="cb"></div>${it(2, "")}${it(40, "Radius:")}
      ${it(100, html`<span class="dim">1000.0</span>`, "optI")}
    </div>`;
  }

  private props() {
    return html`<div class="left">
      <div class="phead l"><span>Properties</span>${ic("closeThin", "s10")}</div>
      <div class="thumbRow">
        <div class="thumb"><div class="thumbR">R</div></div>
        <div class="thumbC"></div>
        <div style="padding-right:4px">${ic("caretD", "s8")}</div>
      </div>
      <div class="typeRow">
        <div class="typeName"><span>Extrusion</span>${ic("chevD", "s8")}</div>
        <div class="typeEdit">${ic("editType", "s12")}<span>Edit Type</span></div>
      </div>
      ${PROPS.map((p) => p.h
        ? html`<div class="sec"><span>${p.h}</span>${ic("dblUp", "s8")}</div>`
        : html`<div class="row ${p.dim ? "dimmed" : ""}">
            <div class="lb">${p.l}</div>
            ${p.kind === "input" ? html`<div class="inp">${p.v}</div>`
              : p.kind === "btn" ? html`<div class="btn">Edit...</div>`
              : p.kind === "check" ? html`<div><div class="vchk">${ic("checkW", "s8")}</div></div>`
              : html`<div class="val">${p.v}</div>`}
            ${p.box ? html`<div class="sbox"></div>` : html`<div></div>`}
          </div>`)}
      <div class="pfill"></div>
      <div class="pfoot"><span class="plink">Properties help</span><div class="apply">Apply</div></div>
    </div>`;
  }

  private canvas() {
    const L = "180,-2 180,132 258,132 258,314 207,314 207,462";
    const R = "374,-2 374,132 311,132 311,314 374,314 374,462";
    return html`<div class="canvas">
      <svg class="d" width="694" height="459" viewBox="0 0 694 459">
        <polyline points=${L} fill="none" stroke="#fcd4fc" stroke-width="2.200"/>
        <polyline points=${R} fill="none" stroke="#fcd4fc" stroke-width="2.200"/>
        <polyline points=${L} fill="none" stroke="#cc30d0" stroke-width="1"/>
        <polyline points=${R} fill="none" stroke="#cc30d0" stroke-width="1"/>
        <path d="M258 314H311" stroke="#9a5aa0" stroke-width="1"/>
        <path d="M308 349H322M315 342V356" stroke="#333" stroke-width="1"/>
      </svg>
      <div class="nav">
        <div class="navGear">${ic("gear", "s6")}</div>
        ${ic("nav2d", "s18")}
        ${ic("caretD", "s6")}
        <div class="navSep"></div>
        ${ic("navZoom", "s14")}
        ${ic("caretD", "s6")}
        <div class="pfill"></div>
        <div class="navGear">${ic("gear", "s6")}</div>
      </div>
    </div>`;
  }

  private center() {
    return html`<div class="center">
      <div class="dtabs">
        <div class="dtab">${ic("house3d", "s12")}<span>{3D}</span></div>
        <div class="dtab on"><span class="dtabOn">${ic("viewPlan", "s12")}Level 1</span>${ic("closeThin", "s10")}</div>
        <div class="dtab sec17">${ic("section", "s12")}<span>Section 17</span></div>
        <div class="dtabMore">${ic("qatMore", "s10")}</div>
      </div>
      <div class="cArea">
        ${this.canvas()}
        <div class="vs"><div class="vsT">${ic("chevU", "s10")}</div><div class="vsTh"></div><div class="vsT">${ic("chevD", "s10")}</div></div>
        <div class="vgap"></div>
      </div>
      <div class="vbar">
        <div class="vscale">1 : 100</div>
        <div class="vcell">${ic("vbDetail", "s14")}</div>
        <div class="vcell">${ic("vbCube", "s14")}</div>
        <div class="vcell">${ic("vbCropX", "s14")}</div>
        <div class="vcell">${ic("vbCropDot", "s14")}</div>
        <div class="vcell">${ic("vbGlass", "s12")}</div>
        <div class="vcell">${ic("vbFrame", "s14")}</div>
        <div class="vcell">${ic("vbWin", "s14")}</div>
        <div class="vcell" style="width:14px">${ic("chevL", "s10")}</div>
        <div class="vthumbWrap"><div class="vthumb"></div></div>
        <div class="vend">${ic("chevR", "s10")}</div>
        <div class="vgrip">${ic("grip", "s8")}</div>
      </div>
      <div class="pad"></div>
    </div>`;
  }

  private treeRow(r: TreeRow) {
    switch (r.k) {
      case "plus": return html`<div class="t plus"><span class="tick"></span><span class="pl">+</span><span class="lbl">${r.t}</span></div>`;
      case "root": return html`<div class="t root"><span class="m"></span>${ic("sheetIc", "s14")}<span class="lbl">${r.t}</span></div>`;
      case "l1": return html`<div class="t l1"><span class="tick"></span><span class="m"></span><span class="lbl">${r.t}</span></div>`;
      case "l2": return html`<div class="t l2"><span class="tickGap"></span><span class="tick"></span><span class="m"></span><span class="lbl">${r.t}</span></div>`;
      case "l3": return html`<div class="t l3"><span class="tickGap"></span><span class="tick"></span>${ic(r.i!, "s12")}<span class="lbl">${r.t}</span></div>`;
      default: return html`<div class="t leaf"><span class="tick"></span><span class="lbl">${r.t}</span></div>`;
    }
  }

  private right() {
    return html`<div class="right">
      <div class="phead"><span>Project Browser - salah aldin soliman ABDALLAHR1</span>${ic("closeThin", "s10")}</div>
      <div class="searchWrap"><div class="search">${ic("search", "s14")}<span>Search</span></div></div>
      <div class="treeWrap">
        <div class="tree">${TREE.map((r) => this.treeRow(r))}</div>
        <div class="ts"><div class="tsT">${ic("chevU", "s10")}</div><div class="tsTh"></div><div class="tsT">${ic("chevD", "s10")}</div></div>
      </div>
    </div>`;
  }

  render() {
    return html`
      <div class="blackTop"></div>
      <div class="titlebar">
        <div class="tl"><div class="rlogo">R</div>${ic("logoDoc", "s12")}</div>
        <div class="title">Autodesk Revit 2024 - salah aldin soliman ABDALLAHR1 - Floor Plan: Level 1</div>
        <div class="tr">
          <div class="cell" style="width:12px">${ic("caretL", "s6")}</div>
          <div class="cell" style="width:20px">${ic("binoc", "s12")}</div>
          <div class="cell" style="width:20px">${ic("user", "s12")}</div>
          <div class="uname">salahsolimana...</div>
          <div class="cell" style="width:8px">${ic("caretD", "s6")}</div>
          <div class="cell" style="width:26px">${ic("cart", "s12")}</div>
          <div class="vsep"></div>
          <div class="cell" style="width:29px">${ic("help", "s14")}</div>
          <div class="cell" style="width:4px">${ic("caretD", "s6")}</div>
          <div class="cell" style="width:60px;justify-content:flex-end">${ic("min", "s12")}</div>
          <div class="cell" style="width:21px;justify-content:flex-end">${ic("restore", "s12")}</div>
          <div class="cell" style="width:21px;justify-content:flex-end">${ic("close", "s12")}</div>
        </div>
      </div>
      ${this.tabs()}
      ${this.ribbon()}
      ${this.qat()}
      ${this.opts()}
      <div class="main">${this.props()}${this.center()}${this.right()}</div>
      <div class="status"><span>Click to enter line start point.</span>
        <div class="stIcons">
          ${ic("stLoop", "s14")}${ic("stLink", "s14")}${ic("stPin", "s14")}${ic("stFace", "s14")}${ic("stDrag", "s14")}${ic("stDots", "s14")}${ic("funnel", "s14")}<span class="stZero">:0</span>
        </div>
      </div>
      <div class="blackBot"></div>
    `;
  }
}
